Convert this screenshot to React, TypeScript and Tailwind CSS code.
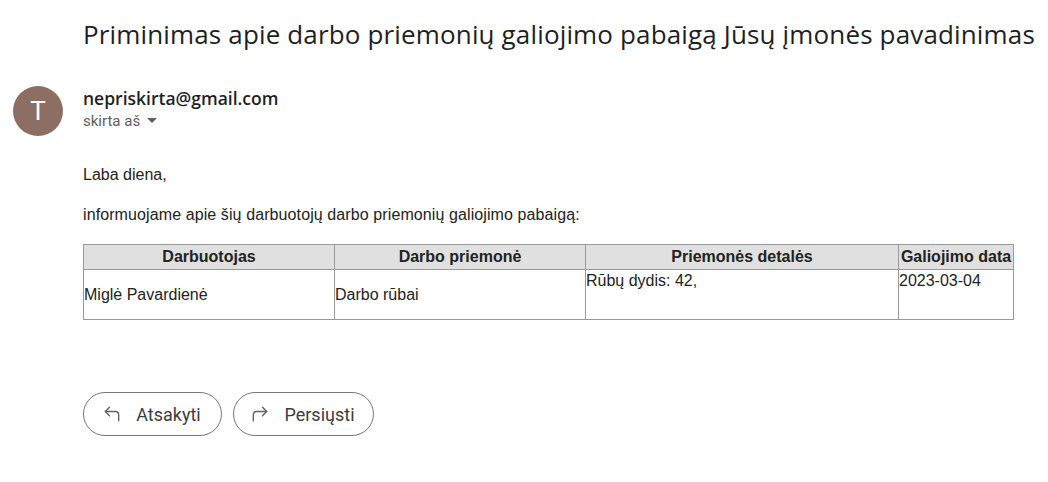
import React from "react";
import { CornerUpLeft, CornerUpRight } from "lucide-react";

export default function App() {
  return (
    <div className="w-[1048px] h-[482px] bg-white overflow-hidden" style={{ fontFamily: "Roboto, 'Noto Sans', sans-serif" }}>
      <div className="pl-[83px] pt-[14px]">
        <h1 className="text-[26px] leading-[40px] text-[#1f1f1f] font-normal whitespace-nowrap tracking-[0.15px]" style={{ fontFamily: "'Open Sans', Roboto, sans-serif" }}>
          Priminimas apie darbo priemonių galiojimo pabaigą Jūsų įmonės pavadinimas
        </h1>
      </div>
      <div className="flex items-start pl-[13px] pt-[32px] gap-[20px]">
        <div className="w-[50px] h-[50px] rounded-full bg-[#8d6e63] flex items-center justify-center text-white text-[26px]">
          T
        </div>
        <div className="flex flex-col pt-[0px]">
          <div className="text-[17.5px] leading-[24px] font-semibold text-[#1f1f1f]" style={{ fontFamily: "'Open Sans', Roboto, sans-serif" }}>nepriskirta@gmail.com</div>
          <div className="flex items-center gap-[7px] text-[15px] leading-[20px] text-[#5e5e5e] mt-[1px]">
            <span>skirta aš</span>
            <svg width="10" height="6" viewBox="0 0 10 6"><path d="M0 0 L10 0 L5 5 Z" fill="#5e5e5e" /></svg>
          </div>
        </div>
      </div>
      <div className="pl-[83px] pt-[29px] text-[16px] text-[#222]" style={{ fontFamily: "'Liberation Sans', Arial, sans-serif" }}>
        <p className="leading-[20px]">Laba diena,</p>
        <p className="leading-[20px] mt-[20px] tracking-[0.1px]">informuojame apie šių darbuotojų darbo priemonių galiojimo pabaigą:</p>
        <table className="mt-[19px] border-collapse border border-[#999] w-[930px] table-fixed text-[16px] text-[#222]">
          <colgroup>
            <col className="w-[251px]" />
            <col className="w-[251px]" />
            <col className="w-[313px]" />
            <col className="w-[115px]" />
          </colgroup>
          <thead>
            <tr className="bg-[#e0e0e0] h-[25px]">
              <th className="border border-[#999] font-bold text-center leading-[22px] p-0">Darbuotojas</th>
              <th className="border border-[#999] font-bold text-center leading-[22px] p-0">Darbo priemonė</th>
              <th className="border border-[#999] font-bold text-center leading-[22px] p-0">Priemonės detalės</th>
              <th className="border border-[#999] font-bold text-center leading-[22px] p-0 whitespace-nowrap">Galiojimo data</th>
            </tr>
          </thead>
          <tbody>
            <tr className="h-[50px]">
              <td className="border border-[#999] p-0 align-middle leading-[22px]">Miglė Pavardienė</td>
              <td className="border border-[#999] p-0 align-middle leading-[22px]">Darbo rūbai</td>
              <td className="border border-[#999] p-0 align-top leading-[22px]">Rūbų dydis: 42,</td>
              <td className="border border-[#999] p-0 align-top leading-[22px]">2023-03-04</td>
            </tr>
          </tbody>
        </table>
      </div>
      <div className="pl-[83px] pt-[72px] flex gap-[11px]">
        <button className="h-[44px] w-[139px] rounded-full border border-[#747775] flex items-center justify-center gap-[14px] text-[18px] font-normal text-[#3c3c3c] pr-[2px]">
          <CornerUpLeft size={20} strokeWidth={1.7} color="#5f6368" />
          <span>Atsakyti</span>
        </button>
        <button className="h-[44px] w-[141px] rounded-full border border-[#747775] flex items-center justify-center gap-[14px] text-[18px] font-normal text-[#3c3c3c] pr-[2px]">
          <CornerUpRight size={20} strokeWidth={1.7} color="#5f6368" />
          <span>Persiųsti</span>
        </button>
      </div>
    </div>
  );
}
